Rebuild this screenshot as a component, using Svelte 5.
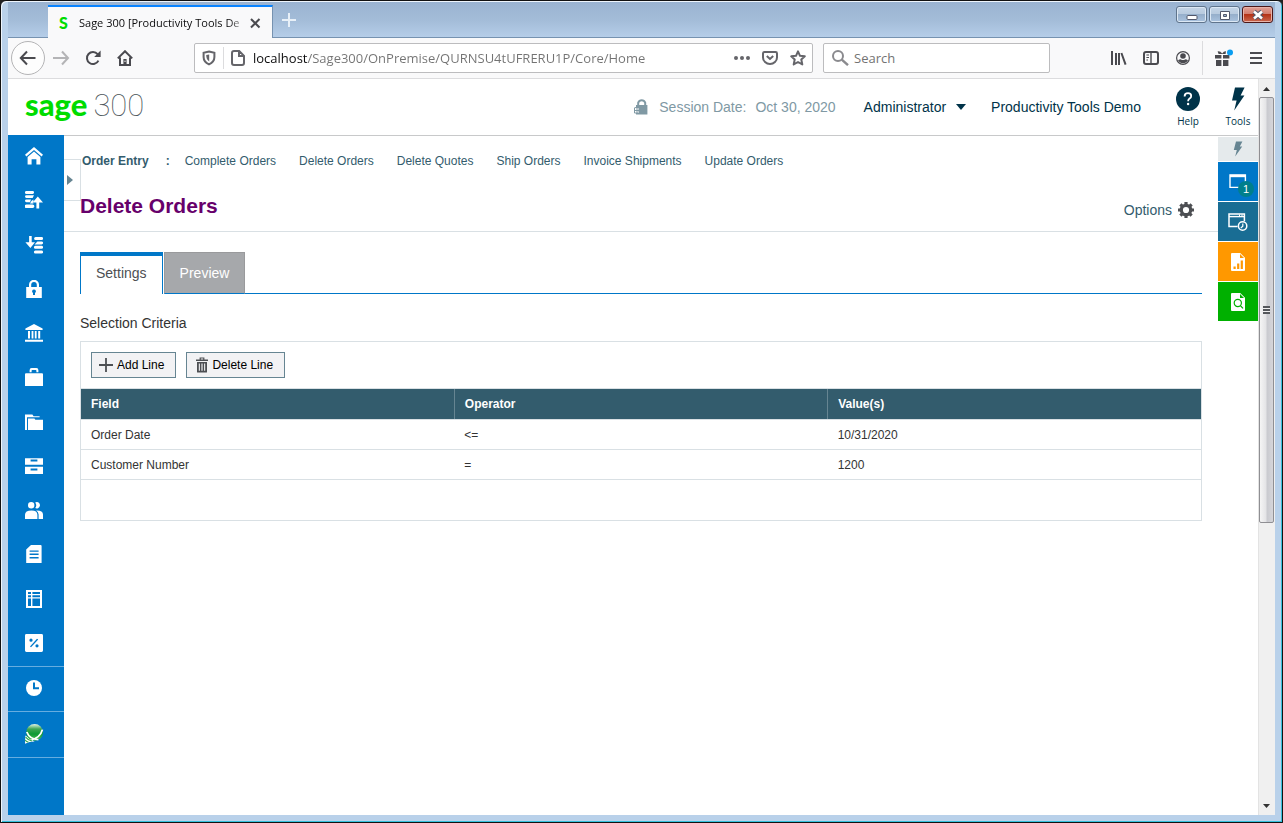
<script>
  let activeTab = $state('Settings');
  let url = $state('localhost/Sage300/OnPremise/QURNSU4tUFRERU1P/Core/Home');
  let search = $state('');

  const tabs = ['Settings', 'Preview'];

  const pages = [
    'Complete Orders',
    'Delete Orders',
    'Delete Quotes',
    'Ship Orders',
    'Invoice Shipments',
    'Update Orders'
  ];

  const criteria = [
    { field: 'Order Date', operator: '<=', value: '10/31/2020' },
    { field: 'Customer Number', operator: '=', value: '1200' }
  ];

  // 18 x 18 glyphs, filled with the even-odd rule
  const modules = [
    { name: 'Home', d: 'M9 0 18 7.8 16.6 9.4 9 2.9 1.4 9.4 0 7.8zM9 4.6 15.4 10V17.5H11.4V12.2H6.6V17.5H2.6V10z' },
    { name: 'Accounts Payable', d: 'M1.4 0H7.6A1.4 1.4 0 0 1 7.6 2.9H1.4A1.4 1.4 0 0 1 1.4 0zM1.4 4.2H9L7.6 7H1.4A1.4 1.4 0 0 1 1.4 4.2zM1.4 8.4H6L5 11.2H1.4A1.4 1.4 0 0 1 1.4 8.4zM6.4 10 8.4 8.4V12.4H5zM1.4 13.4H7.6A1.4 1.4 0 0 1 7.6 17H1.4A1.4 1.4 0 0 1 1.4 13.4zM12.8 5.4 18 11.6H14.2V17.4H11.4V11.6H7.6z' },
    { name: 'Accounts Receivable', d: 'M4.1 0H6.7V6.2H10L5.4 12 0.4 6.2H4.1zM10.6 1H16.6A1.3 1.3 0 0 1 16.6 4H10.6A1.3 1.3 0 0 1 10.6 1zM12.4 5.4H16.6A1.3 1.3 0 0 1 16.6 8.4H9.6zM10.4 9.8H16.6A1.3 1.3 0 0 1 16.6 12.8H10.4A1.3 1.3 0 0 1 10.4 9.8zM10.4 14.6H16.6A1.3 1.3 0 0 1 16.6 17.6H10.4A1.3 1.3 0 0 1 10.4 14.6z' },
    { name: 'Administrative Services', d: 'M1.2 7H4V4.6A5 4.8 0 0 1 14 4.6V7H16.8V18H1.2zM6.2 7H11.8V4.8A2.8 2.9 0 0 0 6.2 4.8zM9 9.4A1.9 1.9 0 0 0 8 12.9V15H10V12.9A1.9 1.9 0 0 0 9 9.4z' },
    { name: 'Bank Services', d: 'M9 0 17.6 4.6V6H0.4V4.6zM3 7H5V14.4H3zM6.6 7H8.4V14.4H6.6zM9.8 7H11.6V14.4H9.8zM13.2 7H15.2V14.4H13.2zM0 15.8H18V17.8H0z' },
    { name: 'Common Services', d: 'M4.6 4.2V2.2Q4.6 0 6.6 0H11.4Q13.4 0 13.4 2.2V4.2H11.4V2.6Q11.4 2 10.8 2H7.2Q6.6 2 6.6 2.6V4.2zM1 5.2H17Q18 5.2 18 6.2V18H0V6.2Q0 5.2 1 5.2z' },
    { name: 'General Ledger', d: 'M0 1.4H7.4L8.6 3.2H14.6V4.2H2V17H0zM3 5.4H9.4L10.4 6.8H18V17H3z' },
    { name: 'Inventory Control', d: 'M0 1.2H18V7.8H0zM5.6 2.6H12.4V4.6H5.6zM0 9.8H18V17H0zM5.6 11.6H12.4V13.6H5.6z' },
    { name: 'Order Entry', d: 'M6.2 1A3.2 3.2 0 1 1 6.2 7.4A3.2 3.2 0 1 1 6.2 1zM11.8 1A3.2 3.2 0 1 1 10.2 7A4.6 4.6 0 0 0 10.2 1.4A3.2 3.2 0 0 1 11.8 1zM0 18V13.8Q0 9.4 6.6 9.4Q12.4 9.4 12.4 13.8V18zM11.2 9.4Q18 9.2 18 13.6V18H13.6V13.6Q13.4 10.6 11.2 9.4z' },
    { name: 'Purchase Orders', d: 'M6 0H15.6Q16.6 0 16.6 1V18H1.2V4.6zM4.6 5.4H13.6V6.8H4.6zM4.6 8.6H13.6V10H4.6zM4.6 12H13.6V13.4H4.6z' },
    { name: 'Project and Job Costing', d: 'M1 0H17V18H1zM3 2H6V4H3zM7.4 2H15V4H7.4zM3 5.2H6V7.2H3zM7.4 5.2H15V7.2H7.4zM3 8.6H6V16H3zM7.4 8.6H15V16H7.4z' },
    { name: 'Tax Services', d: 'M1.4 0H16.6Q18 0 18 1.4V16.6Q18 18 16.6 18H1.4Q0 18 0 16.6V1.4Q0 0 1.4 0zM6 4.6A1.6 1.6 0 1 0 6 7.8A1.6 1.6 0 1 0 6 4.6zM12 4.8 13.2 5.6 6 13.2 5 12.4zM12 10.2A1.6 1.6 0 1 0 12 13.4A1.6 1.6 0 1 0 12 10.2z' }
  ];
</script>

<div class="window">
  <div class="titlebar">
    <div class="browser-tab">
      <span class="favicon">S</span>
      <span class="tab-title">Sage 300 [Productivity Tools De</span>
      <button class="plain" aria-label="Close tab">
        <svg width="12" height="12" viewBox="0 0 12 12"><path d="M2 2 10.5 10.5M10.5 2 2 10.5" stroke="#4a4a4f" stroke-width="2" fill="none" /></svg>
      </button>
    </div>
    <button class="plain new-tab" aria-label="New tab">
      <svg width="14" height="14" viewBox="0 0 14 14"><path d="M7 0V14M0 7H14" stroke="#e8f0f8" stroke-width="2" /></svg>
    </button>
    <div class="window-buttons">
      <button class="win-button" aria-label="Minimize">
        <svg width="12" height="12" viewBox="0 0 12 12"><rect x="1" y="6.5" width="10" height="4" rx="1" fill="#fff" stroke="#53586b" /></svg>
      </button>
      <button class="win-button" aria-label="Maximize">
        <svg width="12" height="12" viewBox="0 0 12 12"><path d="M1.5 2.5H10.5V10.5H1.5zM4.5 5.5V7.5H7.5V5.5z" fill="#fff" fill-rule="evenodd" stroke="#53586b" /></svg>
      </button>
      <button class="win-button close" aria-label="Close">
        <svg width="14" height="12" viewBox="0 0 14 12"><path d="M3 2.5 11 9.5M11 2.5 3 9.5" stroke="#53586b" stroke-width="4.6" /><path d="M3 2.5 11 9.5M11 2.5 3 9.5" stroke="#fff" stroke-width="2.6" /></svg>
      </button>
    </div>
  </div>

  <div class="toolbar">
    <button class="plain back" aria-label="Back">
      <svg width="18" height="16" viewBox="0 0 18 16"><path d="M8 1.5 1.8 8 8 14.5M2 8H16.5" class="line" /></svg>
    </button>
    <button class="plain tool" aria-label="Forward">
      <svg width="18" height="16" viewBox="0 0 18 16"><path d="M10 1.5 16 8 10 14.5M16 8H1" class="line pale" /></svg>
    </button>
    <button class="plain tool" aria-label="Reload">
      <svg width="16" height="16" viewBox="0 0 16 16"><path d="M13.4 10.6A6 6 0 1 1 12.6 4.2" class="line" /><path d="M15.6 0.6V7H9.2z" fill="#4a4a4f" /></svg>
    </button>
    <button class="plain tool" aria-label="Home page">
      <svg width="16" height="16" viewBox="0 0 16 16"><path d="M0.8 8.4 8 1.2 15.2 8.4M3 7.5V14.9H13V7.5" class="line" /><path d="M6.4 9H9.6V15H6.4z" fill="#4a4a4f" /><path d="M8 10.6V12" stroke="#fff" /></svg>
    </button>

    <div class="url-bar">
      <svg width="14" height="16" viewBox="0 0 14 16"><path d="M7 1.6 12.4 2.8V7Q12.4 12 7 14.4Q1.6 12 1.6 7V2.8z" fill="none" stroke="#65656a" stroke-width="2" /><path d="M7.2 4.4V11.4Q4.2 9.6 4.2 5z" fill="#65656a" /></svg>
      <span class="divider"></span>
      <svg width="14" height="16" viewBox="0 0 14 16"><path d="M3 1H8.2L13 5.8V13Q13 15 11 15H3Q1 15 1 13V3Q1 1 3 1zM8 1.2V6H12.8" fill="none" stroke="#65656a" stroke-width="2" /></svg>
      <input class="url" aria-label="Address" bind:value={url} />
      <button class="plain" aria-label="Page actions">
        <svg width="16" height="16" viewBox="0 0 16 16" fill="#65656a"><circle cx="2" cy="8" r="2" /><circle cx="8" cy="8" r="2" /><circle cx="14" cy="8" r="2" /></svg>
      </button>
      <button class="plain" aria-label="Save to Pocket">
        <svg width="16" height="16" viewBox="0 0 16 16"><path d="M2.4 2H13.6Q15 2 15 3.4V7.4A7 6.6 0 0 1 1 7.4V3.4Q1 2 2.4 2z" fill="none" stroke="#65656a" stroke-width="2" /><path d="M4.8 6 8 9 11.2 6" fill="none" stroke="#65656a" stroke-width="2" /></svg>
      </button>
      <button class="plain" aria-label="Bookmark this page">
        <svg width="16" height="16" viewBox="0 0 16 16"><path d="M8 1.4 10 5.8 14.8 6.3 11.3 9.5 12.3 14.4 8 12 3.7 14.4 4.7 9.5 1.2 6.3 6 5.8z" fill="none" stroke="#65656a" stroke-width="2" stroke-linejoin="round" /></svg>
      </button>
    </div>

    <div class="search-bar">
      <svg width="17" height="16" viewBox="0 0 17 16"><circle cx="6" cy="6" r="5" fill="none" stroke="#8a8a8e" stroke-width="2" /><path d="M9.8 9.6 16 15.2" stroke="#8a8a8e" stroke-width="2.4" /></svg>
      <input type="search" placeholder="Search" aria-label="Search the web" bind:value={search} />
    </div>

    <div class="toolbar-end">
      <button class="plain tool" aria-label="Library">
        <svg width="16" height="14" viewBox="0 0 16 14"><path d="M1 0V14M5 2V14M8 2V14M10.4 2 14.6 13.6" stroke="#4a4a4f" stroke-width="2" /></svg>
      </button>
      <button class="plain tool" aria-label="Sidebars">
        <svg width="16" height="14" viewBox="0 0 16 14"><rect x="1" y="1" width="14" height="12" rx="2" class="line" /><path d="M8 1V13" stroke="#4a4a4f" stroke-width="1.4" /><path d="M3.4 4H6M3.4 6.5H6M3.4 9H5" stroke="#4a4a4f" /></svg>
      </button>
      <button class="plain tool" aria-label="Account">
        <svg width="16" height="16" viewBox="0 0 16 16"><circle cx="8" cy="8" r="6.4" fill="none" stroke="#4a4a4f" stroke-width="1.2" /><circle cx="8" cy="6" r="2.8" fill="#4a4a4f" /><path d="M3 10.2Q5 9 6 9.4Q8 10.6 10 9.4Q11 9 13 10.2Q11.4 13.2 8 13.2Q4.6 13.2 3 10.2z" fill="#4a4a4f" /></svg>
      </button>
      <span class="toolbar-divider"></span>
      <button class="plain tool" aria-label="What's new">
        <svg width="18" height="18" viewBox="1 0 18 18"><path d="M1 6H7.4V9.6H1zM9 6H15.4V9.6H9zM2 11H7.4V17H2zM9 11H14.4V17H9zM3.6 2.4Q6 1.6 8.2 4.4Q10 1.8 12 2.2L11.6 5H4.6z" fill="#4a4a4f" /><circle cx="16" cy="3.4" r="3" fill="#0a9df0" /></svg>
      </button>
      <button class="plain tool" aria-label="Menu">
        <svg width="12" height="12" viewBox="0 0 12 12"><path d="M0 1H12M0 6H12M0 11H12" stroke="#4a4a4f" stroke-width="2" /></svg>
      </button>
    </div>
  </div>

  <div class="viewport">
    <div class="page">
      <header>
        <div class="logo"><span class="brand">sage</span><span class="product">300</span></div>
        <div class="session">
          <svg width="14" height="17" viewBox="0 0 14 17"><path d="M4.2 7V4.6A3.8 3.8 0 0 1 11.2 4.6V7" fill="none" stroke="#8099a4" stroke-width="2" /><path d="M2 7H13.4V16.4H2V14.6H5V13.4H2V11.6H5V10.4H2z" fill="#8099a4" /><path d="M0.5 9.6H4M0.5 12.5H4M0.5 15H4M0.5 10V15" stroke="#8099a4" /></svg>
          <span>Session Date:</span>
          <span>Oct 30, 2020</span>
        </div>
        <button class="plain user" aria-haspopup="menu">
          Administrator
          <svg width="10" height="6" viewBox="0 0 10 6"><path d="M0 0H10L5 6z" fill="#003349" /></svg>
        </button>
        <span class="company">Productivity Tools Demo</span>
        <button class="plain header-action">
          <svg width="24" height="24" viewBox="0 0 24 24"><circle cx="12" cy="12" r="12" fill="#003349" /><path d="M8.6 9.4Q8.6 6.2 12 6.2Q15.2 6.2 15.2 9Q15.2 10.6 13.6 11.6Q12.1 12.5 12.1 14.2" fill="none" stroke="#fff" stroke-width="1.8" /><circle cx="12.1" cy="17" r="1.2" fill="#fff" /></svg>
          Help
        </button>
        <button class="plain header-action">
          <svg width="14" height="24" viewBox="0 0 14 24"><path d="M4 0.5H13.6L9.6 8.6H13.4L3.2 23.5L5.6 13.4H1z" fill="#003349" /></svg>
          Tools
        </button>
      </header>

      <div class="body">
        <nav class="sidebar" aria-label="Modules">
          <div class="modules">
            {#each modules as module}
              <button class="plain" aria-label={module.name}>
                <svg width="18" height="18" viewBox="0 0 18 18"><path d={module.d} fill="#fff" fill-rule="evenodd" /></svg>
              </button>
            {/each}
          </div>
          <button class="plain extra" aria-label="Recent windows">
            <svg width="16" height="16" viewBox="0 0 16 16"><circle cx="8" cy="8" r="8" fill="#fff" /><path d="M8 2.6V8.2H13" fill="none" stroke="#0077c8" stroke-width="2" /></svg>
          </button>
          <button class="plain extra last" aria-label="Productivity Tools">
            <svg width="20" height="20" viewBox="0 0 20 20">
              <defs>
                <linearGradient id="ball" x1="0" y1="0" x2="0" y2="1">
                  <stop offset="0" stop-color="#e6f5e8" />
                  <stop offset="0.3" stop-color="#3fa652" />
                  <stop offset="0.6" stop-color="#0c9a33" />
                  <stop offset="1" stop-color="#58c05c" />
                </linearGradient>
              </defs>
              <path d="M1.4 11.4 10.6 17.4Q6 17.2 1 19.8z" fill="#fff" />
              <circle cx="10.6" cy="8.4" r="8.4" fill="url(#ball)" />
              <path d="M2.8 8Q5.6 15.4 14.4 15.6M18.4 5.6Q16.4 13.4 7.4 15.8" fill="none" stroke="#fff" stroke-width="1.8" />
              <path d="M1.6 13.2Q4 16.4 8 17M1.2 16.2Q2.6 17.8 4.4 18.2" fill="none" stroke="#35a84c" stroke-width="1.2" />
            </svg>
          </button>
        </nav>

        <main>
          <button class="plain expander" aria-label="Expand menu">
            <svg width="6" height="10" viewBox="0 0 6 10"><path d="M0 0 6 5 0 10z" fill="#668592" /></svg>
          </button>

          <div class="page-head">
            <nav class="crumbs" aria-label="Order Entry">
              <strong>Order Entry</strong>
              <span class="colon">:</span>
              {#each pages as page}
                <a href="#top">{page}</a>
              {/each}
            </nav>
            <div class="title-row">
              <h1>Delete Orders</h1>
              <button class="plain options">
                Options
                <svg width="16" height="16" viewBox="0 0 16 16">
                  <circle cx="8" cy="8" r="4.7" fill="none" stroke="#4d4f53" stroke-width="3.2" />
                  <path d="M8 0V3.4M8 12.6V16M0 8H3.4M12.6 8H16M2.4 2.4 4.6 4.6M11.4 11.4 13.6 13.6M13.6 2.4 11.4 4.6M4.6 11.4 2.4 13.6" stroke="#4d4f53" stroke-width="3.2" />
                </svg>
              </button>
            </div>
          </div>

          <div class="content">
            <div class="tabs" role="tablist">
              {#each tabs as tab}
                <button class="tab" class:active={tab === activeTab} role="tab" aria-selected={tab === activeTab} onclick={() => (activeTab = tab)}>{tab}</button>
              {/each}
              <span class="tabs-rest"></span>
            </div>

            <h2>Selection Criteria</h2>

            <div class="panel">
              <div class="panel-actions">
                <button class="action">
                  <svg width="16" height="16" viewBox="0 0 16 16"><path d="M8 1V15M1 8H15" stroke="#4d4f53" stroke-width="1.8" /></svg>
                  Add Line
                </button>
                <button class="action delete">
                  <svg width="14" height="16" viewBox="0 0 14 16"><path d="M1 2.6H13V4H1zM4.6 2.4V0.6H9.4V2.4H8.2V1.6H5.8V2.4zM2 5H12V15Q12 15.6 11.4 15.6H2.6Q2 15.6 2 15zM3.8 6.6V13.8H4.9V6.6zM6.4 6.6V13.8H7.6V6.6zM9.1 6.6V13.8H10.2V6.6z" fill="#4d4f53" fill-rule="evenodd" /></svg>
                  Delete Line
                </button>
              </div>
              <table>
                <thead>
                  <tr><th scope="col">Field</th><th scope="col">Operator</th><th scope="col">Value(s)</th></tr>
                </thead>
                <tbody>
                  {#each criteria as line}
                    <tr><td>{line.field}</td><td>{line.operator}</td><td>{line.value}</td></tr>
                  {/each}
                </tbody>
              </table>
            </div>
          </div>
        </main>

        <aside class="tools">
          <button class="plain bolt" aria-label="Tools panel">
            <svg width="10" height="16" viewBox="0 0 10 16"><path d="M3 0.5H9.4L6.8 5.6H9.2L2.2 15.5L3.8 9H0.8z" fill="#668592" /></svg>
          </button>
          <button class="plain windows" aria-label="Open windows, 1">
            <svg width="18" height="15" viewBox="0 0 18 15"><path d="M1 1H16.4V13.4H1z" fill="none" stroke="#fff" stroke-width="1.4" /><path d="M1 2H16.4" stroke="#fff" stroke-width="2.4" /></svg>
            <span class="badge">1</span>
          </button>
          <button class="plain recent" aria-label="Recent windows">
            <svg width="20" height="18" viewBox="0 0 20 18"><path d="M9.6 13.4H1V1H16.4V8" fill="none" stroke="#fff" stroke-width="1.5" /><path d="M1 3.6H16.4" stroke="#fff" stroke-width="1.4" /><path d="M11.5 1.5V4M14 1.5V4" stroke="#fff" /><circle cx="14.6" cy="13" r="4.2" fill="none" stroke="#fff" stroke-width="1.5" /><path d="M14.8 10.4V13.2L12.8 15" fill="none" stroke="#fff" stroke-width="1.2" /></svg>
          </button>
          <button class="plain reports" aria-label="Report status">
            <svg width="14" height="18" viewBox="0 0 14 18"><path d="M1 0H9.2L14 4.8V17Q14 18 13 18H1Q0 18 0 17V1Q0 0 1 0zM9 1V5H13z" fill="#fff" fill-rule="evenodd" /><path d="M3.6 16V13.6M7.2 16V10.6M10.8 16V7.4" stroke="#ff9800" stroke-width="2.2" /></svg>
          </button>
          <button class="plain inquiry" aria-label="Inquiries">
            <svg width="14" height="18" viewBox="0 0 14 18"><path d="M1 0H9.2L14 4.8V17Q14 18 13 18H1Q0 18 0 17V1Q0 0 1 0zM9 1V5H13z" fill="#fff" fill-rule="evenodd" /><circle cx="6.8" cy="10" r="3.6" fill="none" stroke="#00b000" stroke-width="1.2" /><path d="M9.4 12.6 12 15.4" stroke="#00b000" stroke-width="1.3" /></svg>
          </button>
        </aside>
      </div>
    </div>

    <div class="scrollbar" aria-hidden="true">
      <svg width="7" height="4" viewBox="0 0 7 4"><path d="M3.5 0 7 4H0z" fill="#333" /></svg>
      <div class="thumb"><span class="grip"></span></div>
      <span class="track"></span>
      <svg width="7" height="4" viewBox="0 0 7 4"><path d="M0 0H7L3.5 4z" fill="#333" /></svg>
    </div>
  </div>
</div>

<style>
  :global(body) {
    background: #222;
  }

  .window {
    box-sizing: border-box;
    min-height: 100vh;
    display: flex;
    flex-direction: column;
    border: 1px solid #111;
    border-radius: 6px 6px 0 0;
    background: #b9d1ea;
    box-shadow: inset 1px 1px 0 #eef5fc, inset -1px -1px 0 #35c0dc;
    padding: 0 7px 7px;
    font-family: "Liberation Sans", Arial, sans-serif;
    font-size: 14px;
    color: #003349;
  }

  button,
  input {
    font: inherit;
    color: inherit;
  }
  svg {
    display: block;
    flex: none;
  }
  .plain {
    display: flex;
    align-items: center;
    justify-content: center;
    padding: 0;
    border: 0;
    background: none;
  }
  .line {
    fill: none;
    stroke: #4a4a4f;
    stroke-width: 2;
  }
  .pale {
    stroke: #b4b4b6;
  }

  /* Browser title bar */
  .titlebar {
    display: flex;
    align-items: flex-start;
    height: 36px;
    margin-top: 1px;
    padding-left: 40px;
    background: linear-gradient(#9ab3d1, #a3bcd8 50%, #b6cee9);
    box-shadow: inset 0 -1px 0 #7692b0;
    font-family: "Open Sans", sans-serif;
    font-size: 11px;
  }
  .browser-tab {
    box-sizing: border-box;
    display: flex;
    align-items: center;
    width: 225px;
    height: 33px;
    margin-top: 3px;
    padding: 0 11px;
    border-top: 2px solid #0a84ff;
    border-right: 1px solid #7692b0;
    background: #f9f9fa;
    color: #0c0c0d;
  }
  .favicon {
    width: 20px;
    font-family: Lato, sans-serif;
    font-size: 16px;
    font-weight: 900;
    color: #00dc00;
  }
  .tab-title {
    flex: 1;
    white-space: nowrap;
    mask-image: linear-gradient(to right, #000 88%, transparent);
  }
  .new-tab {
    width: 32px;
    height: 36px;
  }
  .window-buttons {
    display: flex;
    gap: 2px;
    margin: 4px 2px 0 auto;
  }
  .win-button {
    display: flex;
    align-items: center;
    justify-content: center;
    width: 31px;
    height: 17px;
    padding: 0;
    border: 1px solid #5f748c;
    border-radius: 3px;
    background: linear-gradient(#c4d4e6, #b7cade 50%, #96afcb 50%, #a9c2de);
    box-shadow: inset 0 0 0 1px #dce8f4;
  }
  .close {
    border-color: #4c1718;
    background: linear-gradient(#e2a197, #d0796a 50%, #b43217 50%, #c9674f);
    box-shadow: inset 0 0 0 1px #e8b3a8;
  }

  /* Browser toolbar */
  .toolbar {
    display: flex;
    align-items: center;
    height: 40px;
    padding: 0 3px;
    border-bottom: 1px solid #dcdcde;
    background: #f9f9fa;
    color: #737373;
    font-family: "Open Sans", sans-serif;
  }
  .back {
    box-sizing: border-box;
    width: 34px;
    height: 34px;
    border: 1px solid #b4b4b6;
    border-radius: 50%;
    background: #fdfdfd;
  }
  .tool {
    width: 32px;
    height: 32px;
  }
  .url-bar,
  .search-bar {
    box-sizing: border-box;
    display: flex;
    align-items: center;
    height: 30px;
    border: 1px solid #bcbcbe;
    border-radius: 2px;
    background: #fff;
  }
  .url-bar {
    flex: 1;
    gap: 8px;
    margin-left: 53px;
    padding: 0 4px 0 7px;
  }
  .url-bar button {
    width: 20px;
  }
  .divider {
    width: 1px;
    height: 22px;
    margin: 0 -1px;
    background: #dcdcde;
  }
  .url-bar input,
  .search-bar input {
    flex: 1;
    min-width: 0;
    padding: 0;
    border: 0;
    outline: 0;
  }
  /* the host part of the address is darker than the path */
  .url {
    background: linear-gradient(to right, #0c0c0d 55px, #737373 55px);
    background-clip: text;
    color: transparent;
    font-size: 13px;
  }
  .search-bar {
    width: 227px;
    gap: 5px;
    margin-left: 10px;
    padding: 0 8px;
  }
  .search-bar input {
    background: none;
    font-size: 13px;
  }
  .search-bar input::placeholder {
    color: #737373;
    opacity: 1;
  }
  .toolbar-end {
    display: flex;
    align-items: center;
    margin-left: 53px;
  }
  .toolbar-divider {
    width: 1px;
    height: 34px;
    margin: 0 5px 0 3px;
    background: #dcdcde;
  }

  .viewport {
    flex: 1;
    display: flex;
    background: #fff;
  }
  .page {
    flex: 1;
    min-width: 0;
    display: flex;
    flex-direction: column;
  }

  /* Application header */
  header {
    display: flex;
    align-items: center;
    height: 56px;
  }
  .logo {
    display: flex;
    align-items: baseline;
    gap: 6px;
    margin: 0 auto 6px 17px;
  }
  .brand {
    font-family: Lato, sans-serif;
    font-size: 31px;
    font-weight: 900;
    color: #00dc00;
  }
  .product {
    font-family: Roboto, sans-serif;
    font-size: 31px;
    font-weight: 100;
    color: #4c555a;
  }
  .session {
    display: flex;
    align-items: center;
    gap: 9px;
    color: #8099a4;
  }
  .session svg {
    margin: 0 2px 2px 0;
  }
  .user {
    gap: 10px;
    margin: 0 25px 0 28px;
  }
  .company {
    margin-right: 27px;
  }
  .header-action {
    flex-direction: column;
    gap: 3px;
    width: 40px;
    font-family: "Open Sans", sans-serif;
    font-size: 10px;
  }
  .header-action + .header-action {
    margin-left: 10px;
  }

  .body {
    flex: 1;
    display: flex;
  }

  /* Module sidebar */
  .sidebar {
    width: 56px;
    background: #0077c8;
  }
  .modules {
    display: grid;
    grid-template-rows: repeat(12, 1fr);
    height: 531px;
  }
  .modules button {
    width: 52px;
    padding-bottom: 2px;
  }
  .extra {
    box-sizing: border-box;
    width: 56px;
    height: 45px;
    padding: 0 4px 2px 0;
    border-top: 1px solid #66ade0;
  }
  .last {
    height: 47px;
    border-bottom: 1px solid #66ade0;
  }

  /* Page */
  main {
    position: relative;
    flex: 1;
    min-width: 0;
    border-top: 1px solid #c8c9ca;
  }
  .expander {
    position: absolute;
    top: 23px;
    left: 0;
    box-sizing: border-box;
    width: 17px;
    height: 42px;
    padding-right: 4px;
    border: 1px solid #d9e0e4;
    border-left: 0;
  }
  .page-head {
    padding: 17px 24px 12px 16px;
    border-bottom: 1px solid #d9e0e4;
  }
  .crumbs {
    display: flex;
    gap: 23px;
    padding-left: 2px;
    font-size: 12px;
    line-height: 16px;
    color: #335c6d;
  }
  .crumbs a {
    color: inherit;
    text-decoration: none;
  }
  .colon {
    margin: 0 -8px 0 -6px;
    font-weight: bold;
  }
  .title-row {
    position: relative;
    display: flex;
    align-items: center;
    justify-content: space-between;
    margin-top: 24px;
  }
  h1 {
    margin: 0;
    font-size: 21px;
    line-height: 26px;
    color: #67006b;
  }
  .options {
    gap: 6px;
    margin-top: 8px;
    color: #335c6d;
  }
  .content {
    padding: 20px 16px;
  }
  .tabs {
    display: flex;
    height: 42px;
  }
  .tab {
    padding: 0 15px;
    border: 1px solid #999a9c;
    border-bottom-color: #0077c8;
    background: #a6a8ab;
    color: #fff;
  }
  .tab.active {
    padding-bottom: 4px;
    border: 1px solid #0077c8;
    border-top-width: 4px;
    border-bottom: 0;
    background: #fff;
    color: #4d4f53;
  }
  .tab + .tab {
    margin-left: 1px;
  }
  .tabs-rest {
    flex: 1;
    border-bottom: 1px solid #0077c8;
  }
  h2 {
    margin: 20px 0 9px;
    font-size: 14px;
    font-weight: normal;
    line-height: 18px;
    color: #333;
  }

  /* Criteria grid */
  .panel {
    padding-bottom: 40px;
    border: 1px solid #d9e0e4;
  }
  .panel-actions {
    display: flex;
    gap: 10px;
    padding: 10px;
    border-bottom: 1px solid #d9e0e4;
    font-size: 12px;
  }
  .action {
    display: flex;
    align-items: center;
    gap: 3px;
    height: 26px;
    padding: 0 11px 0 6px;
    border: 1px solid #668592;
    background: #f2f2f4;
    color: #000;
  }
  .delete {
    padding-left: 8px;
  }
  table {
    width: 100%;
    table-layout: fixed;
    border-collapse: collapse;
    font-size: 12px;
    line-height: 14px;
    color: #333;
  }
  th,
  td {
    height: 29px;
    padding: 0 10px;
    border-bottom: 1px solid #d9e0e4;
    text-align: left;
  }
  th {
    height: 30px;
    background: #335c6d;
    color: #fff;
  }
  th + th {
    border-left: 1px solid #668592;
  }

  /* Tool strip on the right */
  .tools {
    display: flex;
    flex-direction: column;
    gap: 1px;
    width: 40px;
    padding-top: 1px;
    border-top: 1px solid #c8c9ca;
  }
  .tools button {
    position: relative;
    height: 39px;
  }
  .tools .bolt {
    height: 24px;
    background: #e5eaec;
  }
  .windows {
    background: #0077c8;
  }
  .recent {
    background: #196d94;
  }
  .reports {
    background: #ff9800;
  }
  .inquiry {
    background: #00b000;
  }
  .badge {
    position: absolute;
    right: 4px;
    bottom: 4px;
    width: 16px;
    border-radius: 50%;
    background: #007f8c;
    color: #fff;
    font-size: 11px;
    line-height: 16px;
    text-align: center;
  }

  /* Scrollbar */
  .scrollbar {
    box-sizing: border-box;
    display: flex;
    flex-direction: column;
    align-items: center;
    width: 17px;
    padding: 8px 1px 7px 0;
    border-left: 1px solid #e3e3e3;
    background: #f0f0f0;
  }
  .thumb {
    box-sizing: border-box;
    flex: 424;
    display: flex;
    align-items: center;
    justify-content: center;
    width: 15px;
    margin-top: 6px;
    border: 1px solid #8f8f93;
    border-radius: 2px;
    background: linear-gradient(to right, #f5f5f5, #e4e4e6 45%, #c9cacf 55%, #d6d6da);
  }
  .grip {
    width: 7px;
    height: 8px;
    background: repeating-linear-gradient(#55585c 0 2px, #f0f0f0 2px 3px);
  }
  .track {
    flex: 281;
  }
</style>
